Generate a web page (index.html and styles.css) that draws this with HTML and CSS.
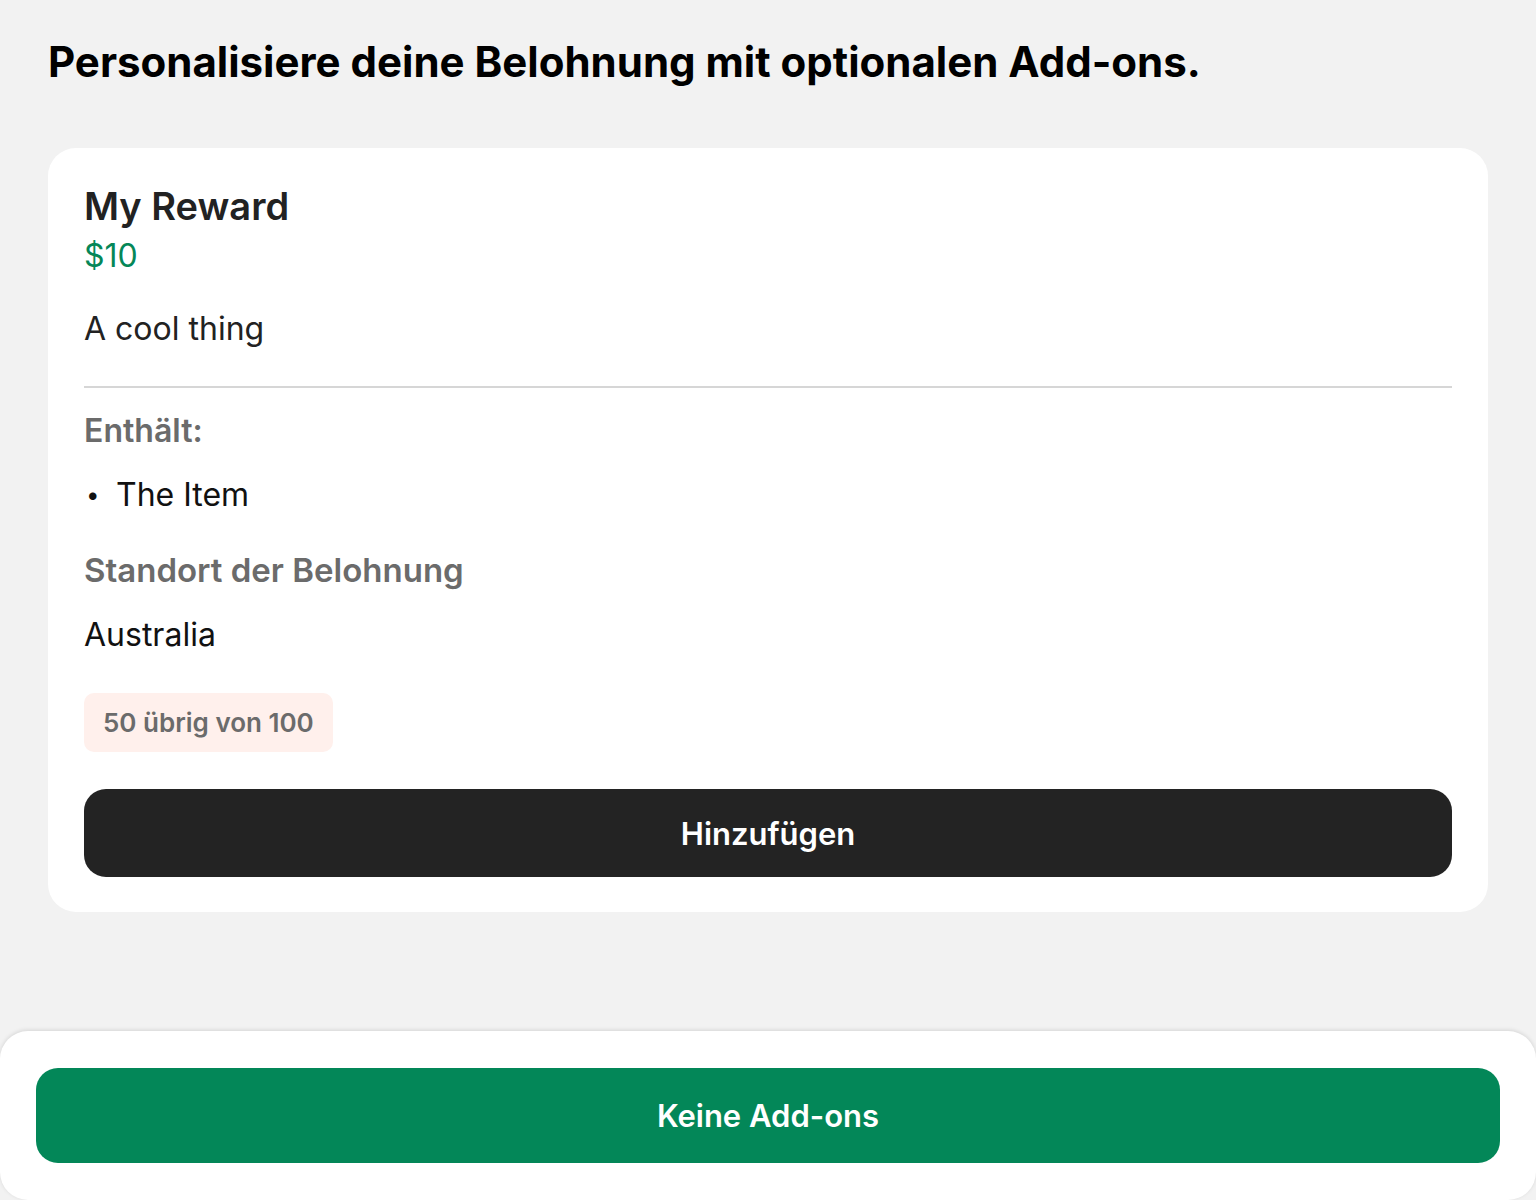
FILE: index.html
```html
<!DOCTYPE html>
<html lang="de">
<head>
<meta charset="utf-8">
<title>Add-ons</title>
<link rel="stylesheet" href="styles.css">
</head>
<body>
<div class="page">
  <main class="content">
    <h1 class="title">Personalisiere deine Belohnung mit optionalen Add-ons.</h1>
    <section class="card">
      <h2 class="reward-name">My Reward</h2>
      <div class="price">$10</div>
      <p class="desc">A cool thing</p>
      <hr class="divider">
      <h3 class="label label-first">Enthält:</h3>
      <ul class="items">
        <li class="item"><span class="bullet">•</span><span>The Item</span></li>
      </ul>
      <h3 class="label label-location">Standort der Belohnung</h3>
      <p class="location">Australia</p>
      <div class="badge">50 übrig von 100</div>
      <button class="btn btn-dark">Hinzufügen</button>
    </section>
  </main>
  <footer class="sheet">
    <button class="btn btn-green">Keine Add-ons</button>
  </footer>
</div>
</body>
</html>
```
FILE: styles.css
```css
* { box-sizing: border-box; }
html, body { margin: 0; padding: 0; }
body {
  background: #f2f2f2;
  font-family: Inter, "Noto Sans", "Liberation Sans", sans-serif;
  color: #222;
}
.page {
  min-height: 100vh;
  display: flex;
  flex-direction: column;
}
.content {
  padding: 38px 48px 0 48px;
}
.title {
  margin: 0;
  font-size: 42px;
  line-height: 48px;
  font-weight: 700;
  color: #000;
}
.card {
  margin-top: 62px;
  background: #fff;
  border-radius: 28px;
  padding: 34px 36px 35px 36px;
  display: flex;
  flex-direction: column;
}
.reward-name {
  margin: 0;
  font-size: 38px;
  line-height: 48px;
  font-weight: 600;
  color: #222;
}
.price {
  margin-top: 6px;
  font-size: 32px;
  line-height: 40px;
  color: #058758;
}
.desc {
  margin: 33px 0 0 0;
  font-size: 32px;
  line-height: 40px;
  color: #222;
}
.divider {
  margin: 37px 0 0 0;
  border: 0;
  height: 2px;
  background: #d6d6d6;
}
.label {
  margin: 0;
  font-size: 32px;
  line-height: 40px;
  font-weight: 600;
  color: #6b6b6b;
}
.label-first { margin-top: 23px; }
.items {
  list-style: none;
  margin: 24px 0 0 0;
  padding: 0;
}
.item {
  display: flex;
  align-items: center;
  font-size: 32px;
  line-height: 40px;
  color: #111;
}
.bullet {
  width: 32px;
  font-size: 24px;
  padding-left: 2px;
}
.label-location {
  margin-top: 35px;
  font-size: 33px;
}
.location {
  margin: 25px 0 0 0;
  font-size: 32px;
  line-height: 40px;
  color: #111;
}
.badge {
  align-self: flex-start;
  margin-top: 38px;
  background: #fff0ec;
  border-radius: 10px;
  padding: 14px 19px;
  font-size: 26px;
  line-height: 31px;
  font-weight: 600;
  color: #6b6b6b;
}
.btn {
  border: 0;
  width: 100%;
  font-family: inherit;
  font-weight: 600;
  font-size: 31px;
  color: #fff;
  border-radius: 22px;
  cursor: pointer;
}
.btn-dark {
  margin-top: 37px;
  height: 88px;
  background: #232323;
}
.sheet {
  margin-top: auto;
  background: #fff;
  border-radius: 28px;
  padding: 37px 36px;
  box-shadow: 0 -1px 4px rgba(0, 0, 0, 0.12);
}
.btn-green {
  height: 95px;
  background: #038758;
  display: block;
}
```
